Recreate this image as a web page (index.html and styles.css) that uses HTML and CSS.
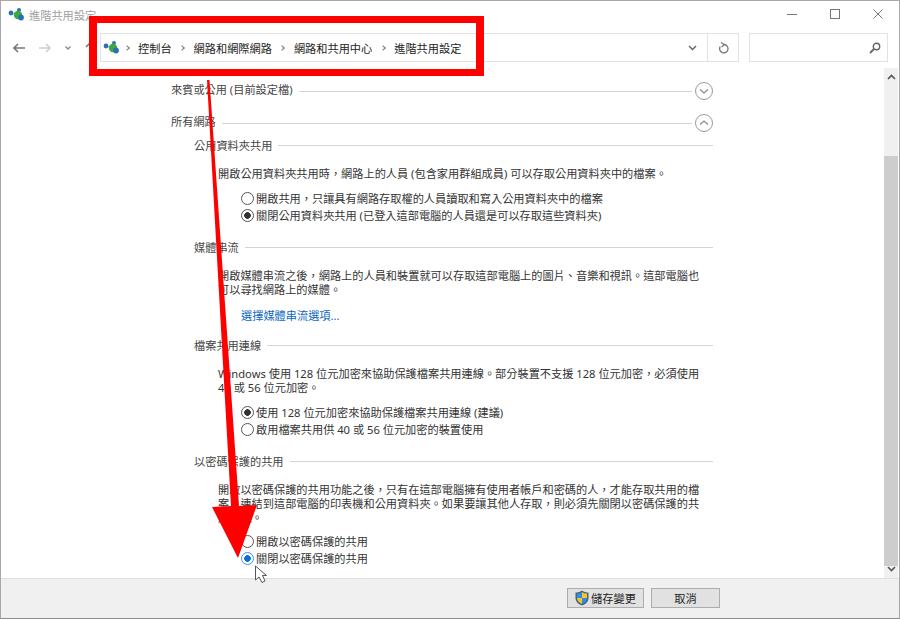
FILE: index.html
```html
<!DOCTYPE html>
<html lang="zh-Hant">
  <head>
    <meta charset="UTF-8" />
    <title>進階共用設定</title>
    <link rel="stylesheet" href="styles.css">
  </head>
  <body>
    <div class="window">
      <div class="titlebar">
        <svg class="app-icon" width="18" height="14" viewBox="0 0 18 14">
          <path d="M3 5 L10 7 M11 2 L10 7 L13 9" stroke="#7aa9d0" stroke-width="1" fill="none" />
          <circle cx="3" cy="5" r="2.4" fill="#2a70b8" />
          <circle cx="11" cy="2" r="2" fill="#2a70b8" />
          <circle cx="10" cy="7" r="4.2" fill="#3ea83e" />
          <circle cx="13" cy="9.5" r="2.9" fill="#2a70b8" />
        </svg>
        <span class="title">進階共用設定</span>
        <div class="win-btns">
          <svg width="10" height="10" viewBox="0 0 10 10"><path d="M0 5.5 H10" stroke="#777" /></svg>
          <svg width="10" height="10" viewBox="0 0 10 10"><rect x="0.5" y="0.5" width="9" height="9" fill="none" stroke="#777" /></svg>
          <svg width="10" height="10" viewBox="0 0 10 10"><path d="M0.5 0.5 L9.5 9.5 M9.5 0.5 L0.5 9.5" stroke="#777" /></svg>
        </div>
      </div>

      <div class="navbar">
        <div class="nav-btns">
          <svg width="12" height="10" viewBox="0 0 12 10"><path d="M12 5 H1 M5 1 L1 5 L5 9" stroke="#777" stroke-width="1.6" fill="none" /></svg>
          <svg width="12" height="10" viewBox="0 0 12 10"><path d="M0 5 H11 M7 1 L11 5 L7 9" stroke="#d0d0d0" stroke-width="1.6" fill="none" /></svg>
          <svg width="6" height="4" viewBox="0 0 6 4"><path d="M0.5 0.5 L3 3 L5.5 0.5" stroke="#888" stroke-width="1.4" fill="none" /></svg>
          <svg width="10" height="12" viewBox="0 0 10 12"><path d="M5 12 V1 M1 5 L5 1 L9 5" stroke="#777" stroke-width="1.6" fill="none" /></svg>
        </div>
        <div class="address">
          <svg class="addr-icon" width="18" height="14" viewBox="0 0 18 14">
            <path d="M3 5 L10 7 M11 2 L10 7 L13 9" stroke="#7aa9d0" stroke-width="1" fill="none" />
            <circle cx="3" cy="5" r="2.4" fill="#2a70b8" />
            <circle cx="11" cy="2" r="2" fill="#2a70b8" />
            <circle cx="10" cy="7" r="4.2" fill="#3ea83e" />
            <circle cx="13" cy="9.5" r="2.9" fill="#2a70b8" />
          </svg>
          <span class="sep"></span>
          <span>控制台</span>
          <span class="sep"></span>
          <span>網路和網際網路</span>
          <span class="sep"></span>
          <span>網路和共用中心</span>
          <span class="sep"></span>
          <span>進階共用設定</span>
          <svg class="addr-drop" width="9" height="6" viewBox="0 0 9 6"><path d="M1 1 L4.5 4.5 L8 1" stroke="#666" stroke-width="1.5" fill="none" /></svg>
          <div class="refresh">
            <svg width="11" height="12" viewBox="0 0 11 12">
              <path d="M6 2.5 A4.2 4.2 0 1 1 2.2 4.5" stroke="#777" stroke-width="1.3" fill="none" />
              <path d="M3 0.5 L6.3 2.5 L3.6 5" stroke="#777" stroke-width="1.2" fill="none" />
            </svg>
          </div>
        </div>
        <div class="search">
          <svg width="12" height="12" viewBox="0 0 12 12">
            <circle cx="7.5" cy="4.5" r="3.2" stroke="#666" stroke-width="1.4" fill="none" />
            <path d="M5 7 L1 11" stroke="#666" stroke-width="1.8" />
          </svg>
        </div>
      </div>

      <div class="middle">
        <div class="content">
          <div class="group-head">
            <span>來賓或公用 (目前設定檔)</span>
            <i class="rule"></i>
            <svg class="toggle" width="18" height="18" viewBox="0 0 18 18">
              <circle cx="9" cy="9" r="8.5" fill="#fff" stroke="#9a9a9a" />
              <path d="M5 7.5 L9 11 L13 7.5" stroke="#8a8a8a" stroke-width="1.2" fill="none" />
            </svg>
          </div>
          <div class="group-head second">
            <span>所有網路</span>
            <i class="rule"></i>
            <svg class="toggle" width="18" height="18" viewBox="0 0 18 18">
              <circle cx="9" cy="9" r="8.5" fill="#fff" stroke="#9a9a9a" />
              <path d="M5 10.5 L9 7 L13 10.5" stroke="#8a8a8a" stroke-width="1.2" fill="none" />
            </svg>
          </div>

          <div class="section first">
            <div class="sub-head"><span>公用資料夾共用</span><i class="rule"></i></div>
            <p class="desc">開啟公用資料夾共用時&#65292;網路上的人員 (包含家用群組成員) 可以存取公用資料夾中的檔案。</p>
            <div class="radios">
              <label><input type="radio" name="pub" />開啟共用&#65292;只讓具有網路存取權的人員讀取和寫入公用資料夾中的檔案</label>
              <label><input type="radio" name="pub" checked />關閉公用資料夾共用 (已登入這部電腦的人員還是可以存取這些資料夾)</label>
            </div>
          </div>

          <div class="section">
            <div class="sub-head"><span>媒體串流</span><i class="rule"></i></div>
            <p class="desc">開啟媒體串流之後&#65292;網路上的人員和裝置就可以存取這部電腦上的圖片、音樂和視訊。這部電腦也<br />可以尋找網路上的媒體。</p>
            <a class="link" href="#">選擇媒體串流選項...</a>
          </div>

          <div class="section after-link">
            <div class="sub-head"><span>檔案共用連線</span><i class="rule"></i></div>
            <p class="desc">Windows 使用 128 位元加密來協助保護檔案共用連線。部分裝置不支援 128 位元加密&#65292;必須使用<br />40 或 56 位元加密。</p>
            <div class="radios">
              <label><input type="radio" name="conn" checked />使用 128 位元加密來協助保護檔案共用連線 (建議)</label>
              <label><input type="radio" name="conn" />啟用檔案共用供 40 或 56 位元加密的裝置使用</label>
            </div>
          </div>

          <div class="section">
            <div class="sub-head"><span>以密碼保護的共用</span><i class="rule"></i></div>
            <p class="desc">開啟以密碼保護的共用功能之後&#65292;只有在這部電腦擁有使用者帳戶和密碼的人&#65292;才能存取共用的檔<br />案、連結到這部電腦的印表機和公用資料夾。如果要讓其他人存取&#65292;則必須先關閉以密碼保護的共<br />用功能。</p>
            <div class="radios">
              <label><input type="radio" name="pwd" />開啟以密碼保護的共用</label>
              <label><input class="focused" type="radio" name="pwd" checked />關閉以密碼保護的共用</label>
            </div>
          </div>
        </div>

        <div class="scrollbar">
          <svg width="9" height="6" viewBox="0 0 9 6"><path d="M1 5 L4.5 1.5 L8 5" stroke="#555" stroke-width="1.6" fill="none" /></svg>
          <div class="track"><div class="thumb"></div></div>
          <svg width="9" height="6" viewBox="0 0 9 6"><path d="M1 1 L4.5 4.5 L8 1" stroke="#555" stroke-width="1.6" fill="none" /></svg>
        </div>
      </div>

      <div class="footer">
        <button class="btn save">
          <svg width="14" height="16" viewBox="0 0 14 16">
            <path d="M7 0.5 C9 2 11 2.5 13.5 2.5 V8 C13.5 12 10 14.5 7 15.5 C4 14.5 0.5 12 0.5 8 V2.5 C3 2.5 5 2 7 0.5 Z" fill="#44637f" />
            <path d="M7 2 V8 H2 V3.6 C4 3.5 5.5 3 7 2 Z" fill="#2f8fdc" />
            <path d="M7 2 C8.5 3 10 3.5 12 3.6 V8 H7 Z" fill="#f7c32e" />
            <path d="M2 8 H7 V14 C4.5 13 2 11 2 8 Z" fill="#f7c32e" />
            <path d="M7 8 H12 C12 11 9.5 13 7 14 Z" fill="#2f8fdc" />
          </svg>
          儲存變更
        </button>
        <button class="btn cancel">取消</button>
      </div>

      <!-- annotations drawn over the window -->
      <div class="callout"></div>
      <svg class="overlay" width="900" height="619" viewBox="0 0 900 619">
        <polygon points="207,80 209.5,80 239,506 257,505 238,558 212,507 231,506" fill="#f00" />
        <path d="M255.5 566 V580 L259 577 L262 582.5 L265 581 L262.5 575.5 L266.5 575.5 Z" fill="#fff" stroke="#555" />
      </svg>
    </div>
  </body>
</html>
```

FILE: styles.css
```css
* {
  box-sizing: border-box;
}

body {
  margin: 0;
  font-family: "Noto Sans", "Noto Sans CJK TC", sans-serif;
  font-size: 11.2px;
  color: #333;
  background: #fff;
}

.window {
  position: relative;
  width: 900px;
  height: 619px;
  display: flex;
  flex-direction: column;
  border: 1px solid #a8a8a8;
  border-bottom-color: #8c8c8c;
  overflow: hidden;
}

.rule {
  flex: 1;
  height: 1px;
  background: #d4d4d4;
}

/* title bar */
.titlebar {
  height: 29px;
  flex: none;
  display: flex;
  align-items: center;
  padding-left: 7px;
}

.app-icon {
  margin-top: -1px;
}

.title {
  margin-left: 3px;
  color: #a0a0a0;
  line-height: 14px;
}

.win-btns {
  margin-left: auto;
  display: flex;
  gap: 33px;
  padding-right: 16px;
  margin-top: -3px;
}

/* address row */
.navbar {
  height: 38px;
  flex: none;
  display: flex;
  padding: 3px 0 6px 12px;
}

.nav-btns {
  width: 87px;
  display: flex;
  align-items: center;
  gap: 14px;
}

.address {
  width: 639px;
  display: flex;
  align-items: center;
  gap: 8.5px;
  padding-left: 2px;
  border: 1px solid #e2e2e2;
  color: #222;
  white-space: nowrap;
}

.addr-icon {
  margin-right: -5px;
}

.sep {
  width: 4px;
  height: 4px;
  margin-right: 1px;
  border-top: 1.4px solid #777;
  border-right: 1.4px solid #777;
  transform: rotate(45deg);
}

.addr-drop {
  margin-left: auto;
  margin-right: 2px;
}

.refresh {
  width: 31px;
  height: 100%;
  display: flex;
  align-items: center;
  justify-content: center;
  border-left: 1px solid #e2e2e2;
}

.search {
  width: 139px;
  margin-left: 10px;
  display: flex;
  align-items: center;
  justify-content: flex-end;
  padding-right: 6px;
  border: 1px solid #e2e2e2;
}

/* scrolling panel */
.middle {
  flex: 1;
  min-height: 0;
  display: flex;
  justify-content: space-between;
}

.content {
  width: 712px;
  padding: 15px 0 0 170px;
  line-height: 16px;
}

.group-head,
.sub-head {
  display: flex;
  align-items: center;
  height: 16px;
  gap: 6px;
  white-space: nowrap;
  color: #444;
}

.group-head span {
  padding-bottom: 3px;
}

.sub-head span {
  padding-top: 2px;
}

.group-head.second {
  margin-top: 16px;
}

.toggle {
  flex: none;
  margin-left: -3px;
}

.section {
  margin: 15px 0 0 23px;
}

.section.first {
  margin-top: 6px;
}

.section.after-link {
  margin-top: 13px;
}

.desc {
  margin: 14px 0 0 24px;
  line-height: 14px;
  color: #333;
  white-space: nowrap;
}

.radios {
  margin: 9px 0 0 47px;
}

.section:last-child .radios {
  margin-top: 8px;
}

.radios label {
  display: flex;
  align-items: center;
  height: 17px;
  white-space: nowrap;
}

.radios input {
  appearance: none;
  width: 13px;
  height: 13px;
  flex: none;
  margin: 0 2px 0 0;
  border: 1px solid #555;
  border-radius: 50%;
  background: #fff;
}

.radios input:checked {
  background: radial-gradient(circle, #333 0 3px, #fff 3.6px);
}

.radios input.focused {
  border-color: #3d94e0;
  background: radial-gradient(circle, #0a6fd1 0 3px, #fff 3.6px);
}

.link {
  display: block;
  margin: 11px 0 0 47px;
  color: #0a66c2;
  text-decoration: none;
}

/* scrollbar */
.scrollbar {
  width: 14px;
  margin-right: 1px;
  display: flex;
  flex-direction: column;
  align-items: center;
  background: #f0f0f0;
  padding: 6px 0;
}

.track {
  flex: 1;
  width: 100%;
  padding-top: 76px;
  margin: 0 0 0;
}

.thumb {
  height: 100%;
  background: #cdcdcd;
  margin-bottom: 4px;
}

/* bottom buttons */
.footer {
  height: 40px;
  flex: none;
  display: flex;
  gap: 7px;
  padding: 9px 0 0 566px;
  background: #f0f0f0;
  border-top: 1px solid #dfdfdf;
}

.btn {
  height: 20px;
  display: flex;
  align-items: center;
  justify-content: center;
  padding: 0;
  border: 1px solid #adadad;
  background: #e1e1e1;
  font: inherit;
  color: #222;
}

.save {
  width: 77px;
  gap: 2px;
}

.cancel {
  width: 69px;
}

/* red box and arrow on top of the screenshot */
.callout {
  position: absolute;
  left: 88px;
  top: 15px;
  width: 395px;
  height: 60px;
  border: 8px solid #f00;
  border-width: 7px 8px;
}

.overlay {
  position: absolute;
  left: -1px;
  top: -1px;
  pointer-events: none;
}
```
